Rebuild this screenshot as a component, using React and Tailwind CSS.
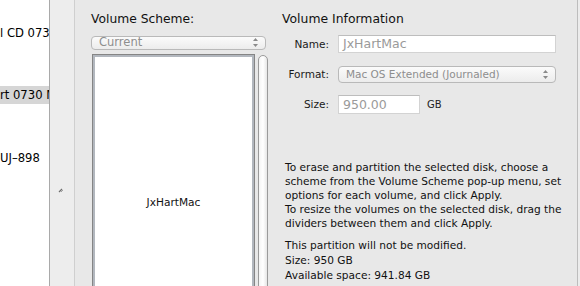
const ui = { fontFamily: '"DejaVu Sans", "Liberation Sans", sans-serif' };

const Arrows = () => (
  <svg width="7" height="11" viewBox="0 0 7 11" className="shrink-0">
    <path d="M3.5 1 L6 4 L1 4 Z" fill="#8a8a8a" />
    <path d="M3.5 10 L6 7 L1 7 Z" fill="#8a8a8a" />
  </svg>
);

const Popup = ({ label, className }) => (
  <div
    className={`flex items-center justify-between rounded-[4px] border border-[#b9b9b9] bg-gradient-to-b from-[#fbfbfb] to-[#ececec] pl-[7px] pr-[6px] text-[#8e8e8e] ${className}`}
  >
    <span className="leading-none">{label}</span>
    <Arrows />
  </div>
);

const Sidebar = () => (
  <div className="w-[49px] shrink-0 bg-white text-[11.6px] text-black overflow-hidden">
    <div className="mt-[25px] h-[16px] leading-[16px] whitespace-nowrap">l CD 0730</div>
    <div className="mt-[45px] h-[18px] leading-[18px] whitespace-nowrap bg-[#d6d6d6]">rt 0730 Media</div>
    <div className="mt-[46px] h-[16px] leading-[16px] whitespace-nowrap">UJ–898</div>
  </div>
);

const Splitter = () => (
  <div className="w-[26px] shrink-0 border-l border-r border-l-[#a9a9a9] border-r-[#cfcfcf] bg-[#ededed] flex justify-center">
    <svg width="6" height="6" viewBox="0 0 6 6" className="mt-[187px] ml-[-2px]">
      <path d="M1 5 L4 2" stroke="#6e6e6e" strokeWidth="1.2" />
      <path d="M3 5 L5 3" stroke="#a0a0a0" strokeWidth="1" />
    </svg>
  </div>
);

const SchemeColumn = () => (
  <div className="w-[177px] shrink-0 flex flex-col">
    <div className="mt-[12px] text-[12.3px] leading-[15px] text-[#111]">Volume Scheme:</div>
    <Popup label="Current" className="mt-[9px] w-[175px] h-[17px] text-[11.5px]" />
    <div className="mt-[4px] flex flex-1 gap-[3px]">
      <div className="ml-[1px] w-[163px] h-[240px] border border-[#858585] bg-white shadow-[inset_2px_2px_0_#b2b7be,inset_-2px_0_0_#b2b7be] pt-[134px] text-center">
        <span className="text-[10.6px] text-[#111]">JxHartMac</span>
      </div>
      <div className="mt-[1px] w-[10px] h-[240px] rounded-t-[5px] border border-[#9a9a9a] bg-gradient-to-r from-[#f4f4f4] via-white to-[#e6e6e6]" />
    </div>
  </div>
);

const InfoColumn = () => (
  <div className="ml-[14px] w-[295px] shrink-0 flex flex-col">
    <div className="mt-[11px] text-[12.4px] leading-[15px] text-[#111]">Volume Information</div>
    <div className="mt-[9px] grid grid-cols-[47px_1fr] gap-x-[9px] text-[10.5px] text-[#1a1a1a] items-center">
      <div className="text-right h-[18px] leading-[18px]">Name:</div>
      <div className="mr-[21px] h-[18px] bg-white border border-[#d3d3d3] border-t-[#bdbdbd] pl-[4px] text-[12.5px] leading-[16px] text-[#9a9a9a]">
        JxHartMac
      </div>
      <div className="mt-[13px] text-right h-[17px] leading-[17px]">Format:</div>
      <Popup
        label="Mac OS Extended (Journaled)"
        className="mt-[13px] mr-[21px] h-[17px] text-[10.5px]"
      />
      <div className="mt-[12px] text-right h-[19px] leading-[19px]">Size:</div>
      <div className="mt-[12px] flex items-center gap-[7px]">
        <div className="w-[82px] h-[19px] bg-white border border-[#d3d3d3] border-t-[#bdbdbd] pl-[4px] text-[12.5px] leading-[17px] text-[#9a9a9a]">
          950.00
        </div>
        <span className="text-[10px] text-[#222]">GB</span>
      </div>
    </div>
    <div className="mt-[46px] pl-[3px] text-[10.6px] leading-[14px] text-[#111]">
      <p>To erase and partition the selected disk, choose a scheme from the Volume Scheme pop-up menu, set options for each volume, and click Apply.</p>
      <p>To resize the volumes on the selected disk, drag the dividers between them and click Apply.</p>
      <div className="mt-[8px] leading-[15px]">
        <p>This partition will not be modified.</p>
        <p>Size: 950 GB</p>
        <p>Available space: 941.84 GB</p>
      </div>
    </div>
  </div>
);

export default function App() {
  return (
    <div className="w-[580px] h-[286px] flex overflow-hidden bg-[#e8e8e8]" style={ui}>
      <Sidebar />
      <Splitter />
      <div className="flex-1 flex pl-[16px] overflow-hidden">
        <SchemeColumn />
        <InfoColumn />
      </div>
      <div className="w-[3px] shrink-0 border-l border-[#bdbdbd] bg-[#ececec]" />
    </div>
  );
}
